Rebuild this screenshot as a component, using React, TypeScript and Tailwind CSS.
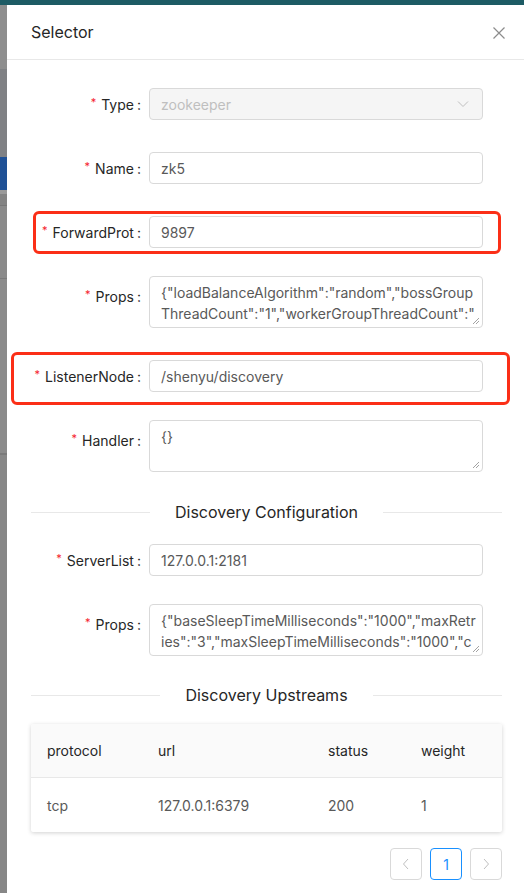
import React from "react";

function Label({ text, tall }: { text: string; tall?: boolean }) {
  return (
    <div
      className={`w-[110px] shrink-0 flex items-center justify-end text-[14px] text-[#262626] ${
        tall ? "h-[40px]" : "h-[32px]"
      }`}
    >
      <span className="text-[#f5222d] mr-[5px] text-[11px] leading-none relative top-[-2px]">*</span>
      <span>{text}</span>
      <span className="ml-[3px]">:</span>
    </div>
  );
}

function Input({ value, disabled }: { value: string; disabled?: boolean }) {
  return (
    <div
      className={`ml-[8px] w-[334px] h-[32px] border border-[#d9d9d9] rounded-[4px] px-[11px] flex items-center text-[14px] ${
        disabled ? "bg-[#f5f5f5] text-[#bfbfbf]" : "bg-white text-[#595959]"
      }`}
    >
      <span className="flex-1">{value}</span>
      {disabled && (
        <svg width="12" height="8" viewBox="0 0 12 8" className="mr-[2px]">
          <path d="M1 1.5l5 5 5-5" fill="none" stroke="#bfbfbf" strokeWidth="1" />
        </svg>
      )}
    </div>
  );
}

function TextArea({ lines }: { lines: string[] }) {
  return (
    <div className="relative ml-[8px] w-[334px] h-[52px] border border-[#d9d9d9] rounded-[4px] pl-[11px] pr-[4px] pt-[5px] text-[14px] leading-[21px] text-[#595959] overflow-hidden bg-white">
      {lines.map((l, i) => (
        <div key={i} className="whitespace-nowrap overflow-hidden">
          {l}
        </div>
      ))}
      <svg width="8" height="8" viewBox="0 0 8 8" className="absolute right-[2px] bottom-[2px]">
        <path d="M7 1L1 7M7 4L4 7" stroke="#8c8c8c" strokeWidth="0.8" fill="none" />
      </svg>
    </div>
  );
}

function Divider({ text }: { text: string }) {
  return (
    <div className="flex items-center h-[24px]">
      <div className="flex-1 h-px bg-[#e8e8e8]" />
      <div className="px-[25px] text-[16px] font-normal text-[#262626] leading-[24px]">{text}</div>
      <div className="flex-1 h-px bg-[#e8e8e8]" />
    </div>
  );
}

export default function App() {
  return (
    <div className="w-[524px] h-[893px] overflow-hidden flex flex-col bg-[#888888] font-['Inter','Noto_Sans',sans-serif]">
      <div className="h-[5px] bg-[#1d5b64] shrink-0" />
      <div className="flex flex-1 min-h-0">
        <div className="w-[7px] shrink-0 flex flex-col">
          <div className="h-[64px] bg-[#8e8e8e]" />
          <div className="h-[88px] bg-[#7f8184]" />
          <div className="h-[33px] bg-[#1f5196]" />
          <div className="h-[4px] bg-[#9a9a9a]" />
          <div className="h-[11px] bg-[#838383]" />
          <div className="h-px bg-[#777777]" />
          <div className="h-[72px] bg-[#8a8a8a]" />
          <div className="h-px bg-[#7a7a7a]" />
          <div className="h-[174px] bg-[#8b8b8b]" />
          <div className="h-[2px] bg-[#7a7a7a]" />
          <div className="flex-1 bg-[#878787]" />
        </div>
        <div className="flex-1 bg-white flex flex-col">
          <div className="h-[55px] shrink-0 border-b border-[#e8e8e8] flex items-center justify-between pl-[24px] pr-[21px]">
            <span className="text-[16px] font-normal text-[#262626]">Selector</span>
            <svg width="12" height="12" viewBox="0 0 12 12" className="relative top-[1px]">
              <path d="M0.5 0.5L11.5 11.5M11.5 0.5L0.5 11.5" stroke="#8c8c8c" strokeWidth="1.2" />
            </svg>
          </div>
          <div className="px-[24px] pt-[28px]">
            <div className="flex items-start">
              <Label text="Type" />
              <Input value="zookeeper" disabled />
            </div>
            <div className="flex items-start mt-[32px]">
              <Label text="Name" />
              <Input value="zk5" />
            </div>
            <div className="relative flex items-start mt-[32px]">
              <Label text="ForwardProt" />
              <Input value="9897" />
              <div className="absolute left-[2px] right-[1px] top-[-5px] bottom-[-6px] border-[3px] border-[#fb2f17] rounded-[6px] pointer-events-none" />
            </div>
            <div className="flex items-start mt-[28px]">
              <Label text="Props" tall />
              <TextArea
                lines={[
                  '{"loadBalanceAlgorithm":"random","bossGroup',
                  'ThreadCount":"1","workerGroupThreadCount":"',
                ]}
              />
            </div>
            <div className="relative flex items-start mt-[32px]">
              <Label text="ListenerNode" />
              <Input value="/shenyu/discovery" />
              <div className="absolute left-[-20px] right-[-8px] top-[-8px] bottom-[-13px] border-[3px] border-[#fb2f17] rounded-[6px] pointer-events-none" />
            </div>
            <div className="flex items-start mt-[28px]">
              <Label text="Handler" tall />
              <TextArea lines={["{}"]} />
            </div>
            <div className="mt-[28px]">
              <Divider text="Discovery Configuration" />
            </div>
            <div className="flex items-start mt-[20px]">
              <Label text="ServerList" />
              <Input value="127.0.0.1:2181" />
            </div>
            <div className="flex items-start mt-[28px]">
              <Label text="Props" tall />
              <TextArea
                lines={[
                  '{"baseSleepTimeMilliseconds":"1000","maxRetr',
                  'ies":"3","maxSleepTimeMilliseconds":"1000","c',
                ]}
              />
            </div>
            <div className="mt-[27px]">
              <Divider text="Discovery Upstreams" />
            </div>
            <div className="mt-[17px] bg-white rounded-[2px] shadow-[0_1px_4px_rgba(0,0,0,0.18)] text-[14px]">
              <div className="grid grid-cols-[111px_170px_93px_97px] h-[54px] items-center bg-[#fafafa] border-b border-[#e8e8e8] font-normal text-[#262626] rounded-t-[2px]">
                <div className="pl-[16px]">protocol</div>
                <div className="pl-[16px]">url</div>
                <div className="pl-[16px]">status</div>
                <div className="pl-[16px]">weight</div>
              </div>
              <div className="grid grid-cols-[111px_170px_93px_97px] h-[54px] items-center text-[#595959]">
                <div className="pl-[16px]">tcp</div>
                <div className="pl-[16px]">127.0.0.1:6379</div>
                <div className="pl-[16px]">200</div>
                <div className="pl-[16px]">1</div>
              </div>
            </div>
            <div className="mt-[16px] flex justify-end gap-[8px]">
              <div className="w-[32px] h-[32px] border border-[#d9d9d9] rounded-[4px] flex items-center justify-center">
                <svg width="8" height="12" viewBox="0 0 8 12">
                  <path d="M6 1L1.5 6L6 11" fill="none" stroke="#bfbfbf" strokeWidth="1" />
                </svg>
              </div>
              <div className="w-[32px] h-[32px] border border-[#1890ff] rounded-[4px] flex items-center justify-center text-[14px] text-[#1890ff]">
                1
              </div>
              <div className="w-[32px] h-[32px] border border-[#d9d9d9] rounded-[4px] flex items-center justify-center">
                <svg width="8" height="12" viewBox="0 0 8 12">
                  <path d="M2 1L6.5 6L2 11" fill="none" stroke="#bfbfbf" strokeWidth="1" />
                </svg>
              </div>
            </div>
          </div>
        </div>
      </div>
    </div>
  );
}
